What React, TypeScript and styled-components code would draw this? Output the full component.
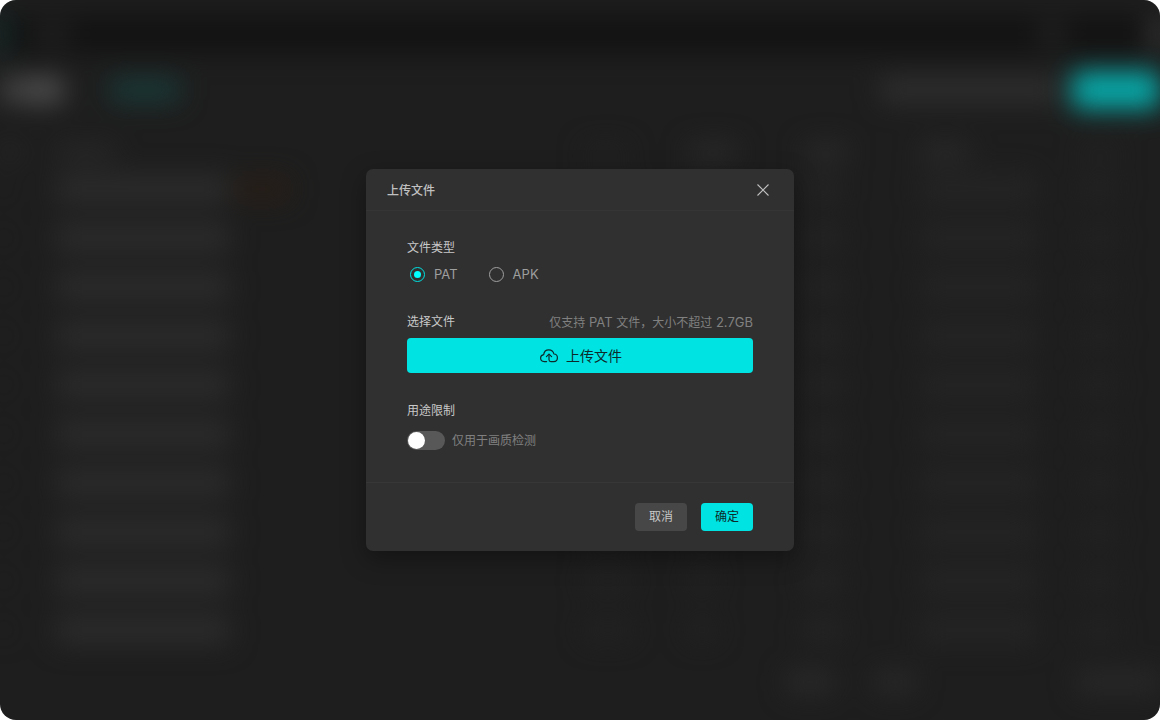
import React, { useState } from "react";
import styled, { createGlobalStyle } from "styled-components";

const GlobalStyle = createGlobalStyle`
  *, *::before, *::after { box-sizing: border-box; }
  body {
    margin: 0;
    background: #ffffff;
    font-family: Inter, "Noto Sans CJK SC", sans-serif;
    font-size: 12px;
    line-height: 18px;
  }
  button, input { font: inherit; }
`;

const Frame = styled.div`
  position: relative;
  display: flex;
  align-items: center;
  justify-content: center;
  min-height: 100vh;
  overflow: hidden;
  border-radius: 16px;
  background: #1e1e1e;
`;

/* Dimmed, out-of-focus file list behind the dialog */
const Backdrop = styled.div`
  position: absolute;
  inset: 0;
  overflow: hidden;
`;

const BackPage = styled.div`
  display: flex;
  flex-direction: column;
  min-height: 100%;
  filter: blur(13px);
`;

const TopBar = styled.div`
  display: flex;
  align-items: center;
  height: 40px;
  margin-top: 14px;
  background: #131313;
`;

const ToolBar = styled.div`
  display: flex;
  align-items: center;
  height: 72px;
`;

const Smudge = styled.div<{ $w: number; $h?: number; $c?: string }>`
  flex: none;
  width: ${(p) => p.$w}px;
  height: ${(p) => p.$h ?? 14}px;
  border-radius: 6px;
  background: ${(p) => p.$c ?? "#2a2a2a"};
`;

const Gap = styled.div<{ $w?: number }>`
  flex: ${(p) => (p.$w ? "none" : "1")};
  width: ${(p) => p.$w ?? 0}px;
`;

const ListRow = styled.div<{ $head?: boolean }>`
  display: grid;
  grid-template-columns: 56px 180px 1fr 104px 116px 116px 160px 80px;
  align-items: center;
  height: ${(p) => (p.$head ? 24 : 49)}px;
  margin-top: ${(p) => (p.$head ? 14 : 0)}px;
`;

const Pager = styled.div`
  display: flex;
  align-items: center;
  height: 56px;
`;

const Dialog = styled.form`
  position: relative;
  width: 428px;
  max-width: calc(100vw - 32px);
  border-radius: 7px;
  background: #303030;
  box-shadow: 0 8px 24px rgba(0, 0, 0, 0.35);
`;

const DialogHeader = styled.header`
  display: flex;
  align-items: center;
  justify-content: space-between;
  height: 42px;
  padding: 0 21px;
  border-bottom: 1px solid #353535;
`;

const DialogTitle = styled.h1`
  margin: 0;
  padding-top: 2px;
  font-size: 12px;
  font-weight: 500;
  color: #c0c0c0;
`;

const CloseButton = styled.button`
  display: flex;
  align-items: center;
  justify-content: center;
  width: 20px;
  height: 20px;
  padding: 0;
  border: 0;
  background: none;
  color: #c0c0c0;
  cursor: pointer;
`;

const DialogBody = styled.div`
  display: flex;
  flex-direction: column;
  gap: 29px;
  padding: 28px 41px 32px;
`;

const Field = styled.fieldset<{ $gap?: number }>`
  display: flex;
  flex-direction: column;
  gap: ${(p) => p.$gap ?? 7}px;
  min-width: 0;
  margin: 0;
  padding: 0;
  border: 0;
`;

const FieldHead = styled.div`
  display: flex;
  justify-content: space-between;
  height: 18px;
`;

const FieldLabel = styled.span`
  color: #c8c8c8;
`;

const Hint = styled.span`
  color: #808080;
`;

const Latin = styled.span`
  font-size: 13px;
`;

const RadioRow = styled.div`
  display: flex;
  gap: 31px;
  height: 20px;
  padding-left: 3px;
`;

const RadioLabel = styled.label`
  display: flex;
  align-items: center;
  gap: 9px;
  color: #9e9e9e;
  font-size: 13px;
  cursor: pointer;
`;

const Radio = styled.input`
  appearance: none;
  display: grid;
  place-items: center;
  width: 15px;
  height: 15px;
  margin: 0;
  border: 1px solid #a0a0a0;
  border-radius: 50%;
  &:checked { border-color: #00e3e3; }
  &:checked::before {
    content: "";
    width: 7px;
    height: 7px;
    border-radius: 50%;
    background: #00ffff;
  }
`;

const UploadButton = styled.button`
  display: flex;
  align-items: center;
  justify-content: center;
  gap: 8px;
  height: 35px;
  padding: 0 0 0 2px;
  border: 0;
  border-radius: 4px;
  background: #00e3e3;
  color: #0d2a2a;
  font-size: 14px;
  cursor: pointer;
`;

const SwitchLabel = styled.label`
  display: flex;
  align-items: center;
  gap: 7px;
  height: 19px;
  color: #808080;
  cursor: pointer;
`;

const Switch = styled.input`
  appearance: none;
  display: flex;
  align-items: center;
  width: 38px;
  height: 19px;
  margin: 0;
  padding: 0 1px;
  border-radius: 10px;
  background: #585858;
  &::before {
    content: "";
    width: 17px;
    height: 17px;
    border-radius: 50%;
    background: #ffffff;
  }
  &:checked { justify-content: flex-end; background: #00e3e3; }
`;

const DialogFooter = styled.footer`
  display: flex;
  justify-content: flex-end;
  gap: 14px;
  padding: 20px 41px;
  border-top: 1px solid #373737;
`;

const ActionButton = styled.button<{ $primary?: boolean }>`
  width: 52px;
  height: 28px;
  padding: 0;
  border: 0;
  border-radius: 4px;
  background: ${(p) => (p.$primary ? "#00e3e3" : "#474747")};
  color: ${(p) => (p.$primary ? "#0d2a2a" : "#c8c8c8")};
  cursor: pointer;
`;

const CloseIcon = () => (
  <svg width="12" height="12" viewBox="0 0 12 12" fill="none" stroke="currentColor" strokeWidth="1.1" aria-hidden="true">
    <path d="M0.5 0.5 11.5 11.5M11.5 0.5 0.5 11.5" />
  </svg>
);

const CloudUploadIcon = () => (
  <svg width="18" height="14" viewBox="0 0 18 14" fill="none" stroke="currentColor" strokeWidth="1.2" strokeLinecap="round" strokeLinejoin="round" aria-hidden="true">
    <path d="M6.6 12.6H4.3C2.1 12.6 0.6 11 0.6 9.1C0.6 7.2 2 5.8 3.7 5.6C4 2.8 6.1 0.8 8.8 0.8C11.3 0.8 13.4 2.5 13.9 5C16 5.1 17.4 6.8 17.4 8.8C17.4 11 15.8 12.6 13.7 12.6H10.9C9.6 12.6 9 11.9 9 10.8V5.3" />
    <path d="M6.4 7.6 9 5.1 11.6 7.6" />
  </svg>
);

const rows = Array.from({ length: 10 }, (_, i) => i);

const FileList = () => (
  <Backdrop aria-hidden="true">
    <BackPage>
      <TopBar>
        <Smudge $w={5} $h={40} $c="#0c4a4a" />
        <Gap $w={30} />
        <Smudge $w={35} $h={24} $c="#1f1f1f" />
        <Gap />
        <Smudge $w={24} $h={22} $c="#242424" />
        <Gap $w={86} />
        <Smudge $w={10} $h={30} $c="#4a4a4a" />
      </TopBar>
      <ToolBar>
        <Smudge $w={24} $h={26} $c="#444444" />
        <Smudge $w={40} $h={28} $c="#4c4c4c" />
        <Gap $w={46} />
        <Smudge $w={70} $h={24} $c="#193a38" />
        <Gap />
        <Smudge $w={180} $h={26} $c="#2e2e2e" />
        <Gap $w={12} />
        <Smudge $w={88} $h={38} $c="#08a8a8" />
      </ToolBar>
      <ListRow $head>
        <Smudge $w={20} />
        <Smudge $w={60} />
        <Gap />
        <Smudge $w={44} $c="#222222" />
        <Smudge $w={50} $h={18} />
        <Smudge $w={44} $h={18} />
        <Smudge $w={50} $h={18} />
        <Smudge $w={40} $c="#232323" />
      </ListRow>
      {rows.map((i) => (
        <ListRow key={i}>
          <Smudge $w={8} $c="#202020" />
          <Smudge $w={174} $h={30} $c="#2b2b2b" />
          {i === 0 ? <Smudge $w={54} $h={24} $c="#281e17" /> : <Gap />}
          <Smudge $w={48} $h={22} $c="#222222" />
          <Smudge $w={28} $h={22} $c="#222222" />
          <Smudge $w={38} $h={26} $c="#242424" />
          <Smudge $w={116} $h={30} $c="#242424" />
          <Smudge $w={38} $h={26} $c="#222222" />
        </ListRow>
      ))}
      <Pager>
        <Gap />
        <Smudge $w={48} $h={24} $c="#292929" />
        <Gap $w={40} />
        <Smudge $w={42} $h={24} $c="#282828" />
        <Gap $w={160} />
        <Smudge $w={84} $h={24} $c="#282828" />
      </Pager>
    </BackPage>
  </Backdrop>
);

export default function App() {
  const [type, setType] = useState("PAT");
  const [limited, setLimited] = useState(false);

  return (
    <>
      <GlobalStyle />
      <Frame>
        <FileList />
        <Dialog role="dialog" aria-labelledby="dialog-title" onSubmit={(e) => e.preventDefault()}>
          <DialogHeader>
            <DialogTitle id="dialog-title">上传文件</DialogTitle>
            <CloseButton type="button" aria-label="关闭">
              <CloseIcon />
            </CloseButton>
          </DialogHeader>
          <DialogBody>
            <Field aria-labelledby="type-label">
              <FieldLabel id="type-label">文件类型</FieldLabel>
              <RadioRow>
                {["PAT", "APK"].map((t) => (
                  <RadioLabel key={t}>
                    <Radio type="radio" name="type" value={t} checked={type === t} onChange={() => setType(t)} />
                    {t}
                  </RadioLabel>
                ))}
              </RadioRow>
            </Field>
            <Field aria-labelledby="file-label">
              <FieldHead>
                <FieldLabel id="file-label">选择文件</FieldLabel>
                <Hint>
                  仅支持<Latin> {type} </Latin>文件，大小不超过<Latin> 2.7GB</Latin>
                </Hint>
              </FieldHead>
              <UploadButton type="button">
                <CloudUploadIcon />
                上传文件
              </UploadButton>
            </Field>
            <Field aria-labelledby="limit-label" $gap={11}>
              <FieldLabel id="limit-label">用途限制</FieldLabel>
              <SwitchLabel>
                <Switch type="checkbox" role="switch" checked={limited} onChange={() => setLimited(!limited)} />
                仅用于画质检测
              </SwitchLabel>
            </Field>
          </DialogBody>
          <DialogFooter>
            <ActionButton type="button">取消</ActionButton>
            <ActionButton type="submit" $primary>确定</ActionButton>
          </DialogFooter>
        </Dialog>
      </Frame>
    </>
  );
}
